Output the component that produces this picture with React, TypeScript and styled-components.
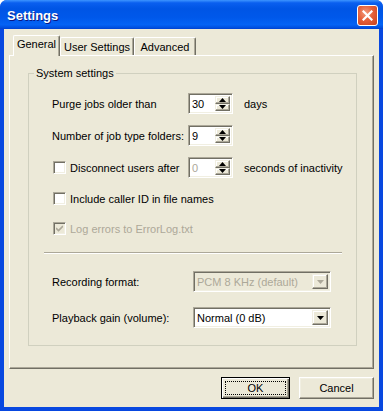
import React from 'react'
import styled, { createGlobalStyle } from 'styled-components'

const GlobalStyle = createGlobalStyle`
  html, body {
    margin: 0;
    padding: 0;
    background: #ffffff;
  }
  body {
    font-family: 'Liberation Sans', Arial, sans-serif;
    font-size: 11px;
    color: #000;
  }
`

const Window = styled.div`
  width: 383px;
  height: 411px;
  display: flex;
  flex-direction: column;
  background: #0848e0;
  border-radius: 7px 7px 0 0;
  overflow: hidden;
`

const TitleBar = styled.div`
  height: 29px;
  flex: none;
  display: flex;
  align-items: center;
  justify-content: space-between;
  padding: 1px 5px 0 7px;
  box-sizing: border-box;
  background: linear-gradient(
    to bottom,
    #3d95ff 0%,
    #0a5fef 10%,
    #0055e5 30%,
    #0058ea 60%,
    #0463f5 85%,
    #0050e0 95%,
    #0040d0 100%
  );
`

const Title = styled.span`
  font-family: 'Liberation Sans', Arial, sans-serif;
  font-weight: bold;
  font-size: 13px;
  color: #ffffff;
  text-shadow: 1px 1px #0a1883;
`

const CloseButton = styled.div`
  width: 21px;
  height: 21px;
  box-sizing: border-box;
  border: 1px solid #ffffff;
  border-radius: 3px;
  background: radial-gradient(circle at 40% 35%, #f29a7c 0%, #e5603a 45%, #c8401c 100%);
  display: flex;
  align-items: center;
  justify-content: center;
`

const Client = styled.div`
  flex: 1;
  margin: 0 4px 4px 4px;
  background: #ece9d8;
  display: flex;
  flex-direction: column;
  padding: 6px 5px 0 5px;
`

const TabRow = styled.div`
  display: flex;
  align-items: flex-end;
  height: 20px;
  padding-left: 4px;
  position: relative;
  z-index: 1;
`

const Tab = styled.div<{ $active?: boolean; $w: number }>`
  width: ${(p) => p.$w}px;
  height: ${(p) => (p.$active ? 21 : 18)}px;
  margin-bottom: ${(p) => (p.$active ? -1 : 0)}px;
  box-sizing: border-box;
  background: #ece9d8;
  border-left: 1px solid #ffffff;
  border-top: 1px solid #ffffff;
  border-right: 1px solid #716f64;
  box-shadow: inset -1px 0 #aca899;
  border-radius: 2px 2px 0 0;
  display: flex;
  align-items: ${(p) => (p.$active ? 'flex-start' : 'center')};
  padding-top: ${(p) => (p.$active ? 2 : 0)}px;
  justify-content: center;
  white-space: nowrap;
`

const Panel = styled.div`
  height: 314px;
  box-sizing: border-box;
  border: 1px solid;
  border-color: #ffffff #716f64 #716f64 #ffffff;
  box-shadow: inset -1px -1px #aca899;
  padding: 17px 0 0 18px;
`

const Group = styled.div`
  position: relative;
  width: 329px;
  height: 273px;
  box-sizing: border-box;
  border: 1px solid #d0d0bf;
  padding: 19px 0 0 23px;
`

const Legend = styled.span`
  position: absolute;
  top: -7px;
  left: 5px;
  padding: 0 2px;
  background: #ece9d8;
  line-height: 13px;
`

const Row = styled.div<{ $mt?: number }>`
  display: flex;
  align-items: center;
  height: 21px;
  margin-top: ${(p) => p.$mt ?? 0}px;
`

const Label = styled.span<{ $w: number; $disabled?: boolean }>`
  width: ${(p) => p.$w}px;
  flex: none;
  white-space: nowrap;
  color: ${(p) => (p.$disabled ? '#aca899' : '#000')};
`

const After = styled.span`
  margin-left: 11px;
  white-space: nowrap;
`

const Sunken = styled.div<{ $w: number; $disabled?: boolean }>`
  width: ${(p) => p.$w}px;
  height: 21px;
  box-sizing: border-box;
  display: flex;
  align-items: stretch;
  border: 1px solid;
  border-color: #aca899 #ffffff #ffffff #aca899;
  box-shadow: inset 1px 1px #716f64, inset -1px -1px #f1efe2;
  background: ${(p) => (p.$disabled ? '#ece9d8' : '#ffffff')};
  padding: 2px;
`

const FieldText = styled.span<{ $disabled?: boolean }>`
  flex: 1;
  display: flex;
  align-items: center;
  padding-left: 1px;
  color: ${(p) => (p.$disabled ? '#aca899' : '#000')};
  white-space: nowrap;
  overflow: hidden;
`

const SpinButtons = styled.div`
  width: 15px;
  display: flex;
  flex-direction: column;
`

const Raised = styled.div`
  flex: 1;
  box-sizing: border-box;
  background: #ece9d8;
  border: 1px solid;
  border-color: #f1efe2 #716f64 #716f64 #f1efe2;
  box-shadow: inset -1px -1px #aca899, inset 1px 1px #ffffff;
  display: flex;
  align-items: center;
  justify-content: center;
`

const DropButton = styled(Raised)`
  flex: none;
  width: 16px;
`

const CheckBox = styled.div<{ $disabled?: boolean }>`
  width: 13px;
  height: 13px;
  flex: none;
  box-sizing: border-box;
  margin-left: 1px;
  border: 1px solid;
  border-color: #aca899 #ffffff #ffffff #aca899;
  box-shadow: inset 1px 1px #716f64, inset -1px -1px #f1efe2;
  background: ${(p) => (p.$disabled ? '#ece9d8' : '#ffffff')};
  display: flex;
  align-items: center;
  justify-content: center;
`

const CheckLabel = styled(Label)`
  margin-left: 4px;
`

const Separator = styled.div`
  margin: 13px 0 0 -8px;
  width: 298px;
  height: 2px;
  border-top: 1px solid #aca899;
  border-bottom: 1px solid #ffffff;
  box-sizing: border-box;
`

const ButtonRow = styled.div`
  display: flex;
  justify-content: flex-end;
  gap: 9px;
  margin-top: 8px;
`

const Button = styled.div<{ $w: number; $default?: boolean }>`
  width: ${(p) => p.$w}px;
  height: 22px;
  box-sizing: border-box;
  background: #ece9d8;
  border: 1px solid;
  border-color: ${(p) => (p.$default ? '#000000' : '#ffffff #716f64 #716f64 #ffffff')};
  box-shadow: ${(p) =>
    p.$default
      ? 'inset 1px 1px #ffffff, inset -1px -1px #716f64, inset -2px -2px #aca899'
      : 'inset -1px -1px #aca899, inset 1px 1px #f1efe2'};
  display: flex;
  align-items: center;
  justify-content: center;
  padding: 3px;
`

const Focus = styled.div`
  width: 100%;
  height: 100%;
  border: 1px dotted #000;
  box-sizing: border-box;
  display: flex;
  align-items: center;
  justify-content: center;
`

const Arrow = ({ dir, color = '#000' }: { dir: 'up' | 'down'; color?: string }) => (
  <svg width="7" height="4" viewBox="0 0 7 4">
    {dir === 'up' ? (
      <polygon points="3.5,0 7,4 0,4" fill={color} />
    ) : (
      <polygon points="0,0 7,0 3.5,4" fill={color} />
    )}
  </svg>
)

const Spin = ({ value, disabled }: { value: string; disabled?: boolean }) => (
  <Sunken $w={45} $disabled={false}>
    <FieldText $disabled={disabled}>{value}</FieldText>
    <SpinButtons>
      <Raised>
        <Arrow dir="up" />
      </Raised>
      <Raised>
        <Arrow dir="down" />
      </Raised>
    </SpinButtons>
  </Sunken>
)

const Combo = ({ value, disabled }: { value: string; disabled?: boolean }) => (
  <Sunken $w={138} $disabled={disabled}>
    <FieldText $disabled={disabled}>{value}</FieldText>
    <DropButton>
      <Arrow dir="down" color={disabled ? '#aca899' : '#000'} />
    </DropButton>
  </Sunken>
)

const Check = ({ checked, disabled }: { checked?: boolean; disabled?: boolean }) => (
  <CheckBox $disabled={disabled}>
    {checked && (
      <svg width="7" height="7" viewBox="0 0 7 7">
        <path d="M0 3 L2.5 5.5 L7 1" stroke={disabled ? '#aca899' : '#000'} strokeWidth="1.6" fill="none" />
      </svg>
    )}
  </CheckBox>
)

export default function App() {
  return (
    <>
      <GlobalStyle />
      <Window>
        <TitleBar>
          <Title>Settings</Title>
          <CloseButton>
            <svg width="11" height="11" viewBox="0 0 11 11">
              <path d="M1.5 1.5 L9.5 9.5 M9.5 1.5 L1.5 9.5" stroke="#ffffff" strokeWidth="2.2" strokeLinecap="square" />
            </svg>
          </CloseButton>
        </TitleBar>
        <Client>
          <TabRow>
            <Tab $active $w={47}>General</Tab>
            <Tab $w={74}>User Settings</Tab>
            <Tab $w={62}>Advanced</Tab>
          </TabRow>
          <Panel>
            <Group>
              <Legend>System settings</Legend>
              <Row>
                <Label $w={136}>Purge jobs older than</Label>
                <Spin value="30" />
                <After>days</After>
              </Row>
              <Row $mt={11}>
                <Label $w={136}>Number of job type folders:</Label>
                <Spin value="9" />
              </Row>
              <Row $mt={11}>
                <Check />
                <CheckLabel $w={118}>Disconnect users after</CheckLabel>
                <Spin value="0" disabled />
                <After>seconds of inactivity</After>
              </Row>
              <Row $mt={10}>
                <Check />
                <CheckLabel $w={260}>Include caller ID in file names</CheckLabel>
              </Row>
              <Row $mt={9}>
                <Check checked disabled />
                <CheckLabel $w={260} $disabled>Log errors to ErrorLog.txt</CheckLabel>
              </Row>
              <Separator />
              <Row $mt={17}>
                <Label $w={141}>Recording format:</Label>
                <Combo value="PCM 8 KHz  (default)" disabled />
              </Row>
              <Row $mt={15}>
                <Label $w={141}>Playback gain (volume):</Label>
                <Combo value="Normal (0 dB)" />
              </Row>
            </Group>
          </Panel>
          <ButtonRow>
            <Button $w={69} $default>
              <Focus>OK</Focus>
            </Button>
            <Button $w={75}>Cancel</Button>
          </ButtonRow>
        </Client>
      </Window>
    </>
  )
}
